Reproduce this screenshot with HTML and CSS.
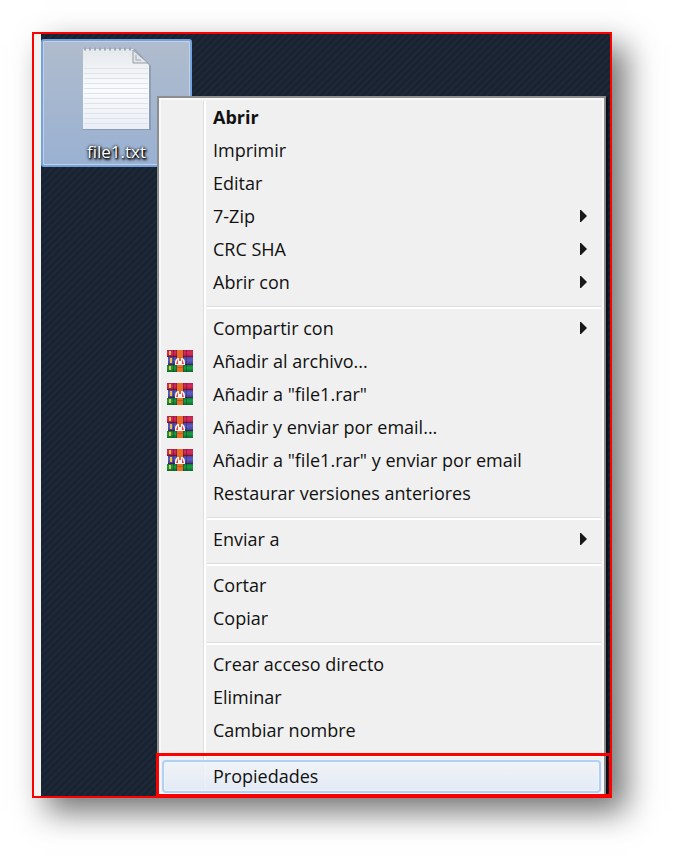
FILE: index.html
```html
<!DOCTYPE html>
<html lang="es">
<head>
<meta charset="utf-8">
<title>file1.txt</title>
<link rel="stylesheet" href="styles.css">
</head>
<body>
<svg class="defs" aria-hidden="true">
  <defs>
    <linearGradient id="red" x2="0" y2="1"><stop offset="0" stop-color="#b0204f"/><stop offset=".4" stop-color="#dc2b5c"/><stop offset="1" stop-color="#a8183f"/></linearGradient>
    <linearGradient id="blue" x2="0" y2="1"><stop offset="0" stop-color="#4a489f"/><stop offset=".4" stop-color="#5c5cc4"/><stop offset="1" stop-color="#3c358c"/></linearGradient>
    <linearGradient id="green" x2="0" y2="1"><stop offset="0" stop-color="#0c7c30"/><stop offset=".4" stop-color="#18a045"/><stop offset="1" stop-color="#0b6a28"/></linearGradient>
    <symbol id="rar" viewBox="0 0 26 24">
      <path fill="url(#red)" d="M0 1h26v7H0z"/>
      <path fill="url(#blue)" d="M1 8h25v8H1z"/>
      <path fill="url(#green)" d="M0 16h26v7H0z"/>
      <path fill="#43152f" opacity=".6" d="M0 7h26v1H0zM1 15h25v1H1z"/>
      <path fill="#2a1030" opacity=".35" d="M6 1h1v22H6zM19 1h1v22h-1zM9 1h1v22H9zM16 1h1v22h-1z"/>
      <path fill="#f0c03c" d="M2 2h2v4H2zM3 9h2v5H3zM2 17h2v4H2z"/>
      <path fill="#ea6f25" d="M10 1h6v22h-6z"/>
      <path fill="#c9551a" d="M10 18h6v1h-6z"/>
      <path fill="#f6f1f4" d="M8 16v-3q1-4 3-4h4q2 0 3 4v3z"/>
      <path fill="#e0402c" d="M11 10l-2 5h2zM15 10l2 5h-2z"/>
      <path fill="#d8691f" d="M12 8h2v4h-2z"/>
    </symbol>
    <symbol id="arrow" viewBox="0 0 7 12"><path fill="#191919" d="M0 0h1l6 6-6 6H0z"/></symbol>
  </defs>
</svg>
<main class="frame">
  <div class="desktop">
    <div class="file">
      <svg class="paper" viewBox="0 0 70 86" aria-hidden="true">
        <defs>
          <linearGradient id="sheet" x2="0" y2="1"><stop offset="0" stop-color="#e6e9ec"/><stop offset=".5" stop-color="#fafbfc"/><stop offset="1" stop-color="#eceef6"/></linearGradient>
          <pattern id="lines" width="70" height="5" patternUnits="userSpaceOnUse"><path d="M0 2.500h70" stroke="#dce3ec"/></pattern>
        </defs>
        <path fill="#71839c" opacity=".5" d="M1 3h52l16 17v64H1z"/>
        <path fill="url(#sheet)" d="M1 3h50l16 16v64H1z"/>
        <path fill="url(#lines)" d="M2 21h64v58H2z"/>
        <path d="M2 3h49" stroke="#9ba8ba" stroke-width="3" stroke-dasharray="2 3"/>
        <path fill="#e3e5e8" stroke="#929ca8" d="M51 4v13h15z"/>
        <path fill="none" stroke="#a4aab2" d="M54 9v5h5"/>
      </svg>
      <span class="filename">file1.txt</span>
    </div>
    <div class="menu" role="menu">
      <button class="item default" role="menuitem">Abrir</button>
      <button class="item" role="menuitem">Imprimir</button>
      <button class="item" role="menuitem">Editar</button>
      <button class="item" role="menuitem">7-Zip<svg class="arrow"><use href="#arrow"/></svg></button>
      <button class="item" role="menuitem">CRC SHA<svg class="arrow"><use href="#arrow"/></svg></button>
      <button class="item" role="menuitem">Abrir con<svg class="arrow"><use href="#arrow"/></svg></button>
      <hr class="rule">
      <button class="item" role="menuitem">Compartir con<svg class="arrow"><use href="#arrow"/></svg></button>
      <button class="item with-icon" role="menuitem"><svg class="rar"><use href="#rar"/></svg>Añadir al archivo...</button>
      <button class="item with-icon" role="menuitem"><svg class="rar"><use href="#rar"/></svg>Añadir a "file1.rar"</button>
      <button class="item with-icon" role="menuitem"><svg class="rar"><use href="#rar"/></svg>Añadir y enviar por email...</button>
      <button class="item with-icon" role="menuitem"><svg class="rar"><use href="#rar"/></svg>Añadir a "file1.rar" y enviar por email</button>
      <button class="item" role="menuitem">Restaurar versiones anteriores</button>
      <hr class="rule">
      <button class="item" role="menuitem">Enviar a<svg class="arrow"><use href="#arrow"/></svg></button>
      <hr class="rule">
      <button class="item" role="menuitem">Cortar</button>
      <button class="item" role="menuitem">Copiar</button>
      <hr class="rule">
      <button class="item" role="menuitem">Crear acceso directo</button>
      <button class="item" role="menuitem">Eliminar</button>
      <button class="item" role="menuitem">Cambiar nombre</button>
      <hr class="rule">
      <button class="item selected" role="menuitem">Propiedades</button>
    </div>
  </div>
</main>
</body>
</html>
```
FILE: styles.css
```css
* {
  box-sizing: border-box;
}

body {
  margin: 0;
  padding: 32px 65px 65px 32px;
  background: #fff;
  font-family: "Open Sans", "Noto Sans", sans-serif;
  font-size: 18px;
  line-height: 24px;
  color: #111;
}

.defs {
  position: absolute;
  width: 0;
  height: 0;
}

.frame {
  padding-left: 7px;
  border: 2px solid #f00;
  background: #f3f3f3;
  box-shadow: 14px 14px 30px rgba(0, 0, 0, 0.55);
}

.desktop {
  display: grid;
  grid-template-columns: 116px minmax(0, 1fr);
  padding: 0 4px 2px 0;
  background: repeating-linear-gradient(135deg, #192230 0 2px, #1e2938 3px 4px, #192230 5px);
}

.file {
  grid-area: 1 / 1 / 2 / 3;
  display: flex;
  flex-direction: column;
  align-items: center;
  width: 151px;
  height: 128px;
  margin-top: 5px;
  padding-top: 5px;
  border: 2px solid #72a3df;
  border-radius: 3px;
  background: linear-gradient(#b0bccd, #9ab1d2);
  box-shadow: inset 0 0 0 1px #c3d1e3;
}

.paper {
  width: 70px;
  height: 86px;
}

.filename {
  margin-top: 8px;
  font-size: 17px;
  line-height: 24px;
  color: #fff;
  text-shadow: 1px 1px 2px #000, 0 0 3px #000, 1px 2px 3px #000;
}

.menu {
  grid-area: 1 / 2;
  position: relative;
  margin-top: 62px;
  padding: 3px 3px 1px;
  border: 2px solid #8d8d8d;
  border-bottom: 0;
  background: linear-gradient(90deg, #dedede 0 1px, #fff 1px 3px, transparent 3px) 44px 3px / 3px 100% no-repeat #f0f0f0;
  box-shadow: inset 0 0 0 2px #f9f9f9, 2px 2px 2px #050b12;
}

.item {
  display: flex;
  align-items: center;
  width: 100%;
  height: 33px;
  margin: 0;
  padding: 0 14px 2px 51px;
  border: 0;
  background: none;
  font: inherit;
  color: inherit;
  text-align: left;
}

.with-icon {
  gap: 20px;
  padding-left: 5px;
}

.default {
  font-weight: 700;
}

.rar {
  width: 26px;
  height: 24px;
}

.arrow {
  width: 7px;
  height: 12px;
  margin-left: auto;
}

.rule {
  height: 3px;
  margin: 7px 0 3px 45px;
  border: 0;
  border-top: 1px solid #dedede;
  background: #fff;
}

.selected {
  position: relative;
  padding-left: 49px;
  border: 2px solid #afd1f5;
  border-radius: 4px;
  background: linear-gradient(rgba(240, 244, 248, 0.8), rgba(224, 233, 247, 0.8));
  box-shadow: inset 0 0 0 1px #edf4fb;
}

.selected::after {
  content: "";
  position: absolute;
  inset: -9px -13px -6px -8px;
  border: 3px solid #f00;
}
```
